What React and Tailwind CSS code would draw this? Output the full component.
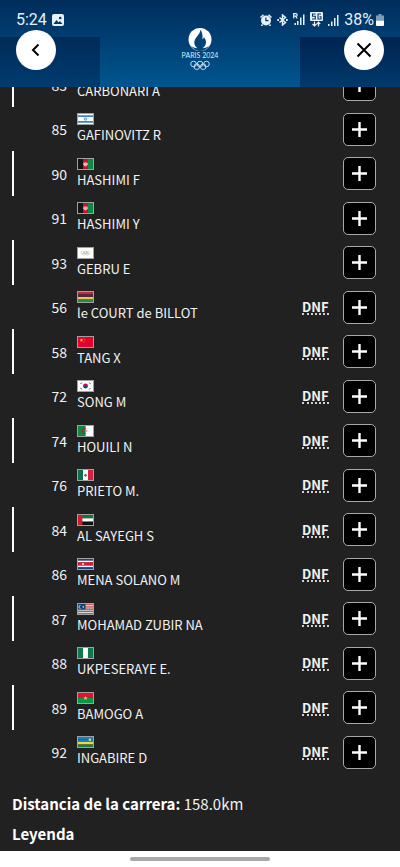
import React from 'react';

const riders = [
  { bib: 83, flag: 'arg', name: 'CARBONARI A' },
  { bib: 85, flag: 'isr', name: 'GAFINOVITZ R' },
  { bib: 90, flag: 'afg', name: 'HASHIMI F' },
  { bib: 91, flag: 'afg', name: 'HASHIMI Y' },
  { bib: 93, flag: 'eor', name: 'GEBRU E' },
  { bib: 56, flag: 'mri', name: 'le COURT de BILLOT', result: 'DNF' },
  { bib: 58, flag: 'chn', name: 'TANG X', result: 'DNF' },
  { bib: 72, flag: 'kor', name: 'SONG M', result: 'DNF' },
  { bib: 74, flag: 'alg', name: 'HOUILI N', result: 'DNF' },
  { bib: 76, flag: 'mex', name: 'PRIETO M.', result: 'DNF' },
  { bib: 84, flag: 'uae', name: 'AL SAYEGH S', result: 'DNF' },
  { bib: 86, flag: 'crc', name: 'MENA SOLANO M', result: 'DNF' },
  { bib: 87, flag: 'mas', name: 'MOHAMAD ZUBIR NA', result: 'DNF' },
  { bib: 88, flag: 'ngr', name: 'UKPESERAYE E.', result: 'DNF' },
  { bib: 89, flag: 'bur', name: 'BAMOGO A', result: 'DNF' },
  { bib: 92, flag: 'rwa', name: 'INGABIRE D', result: 'DNF' },
];

// stripes run top to bottom (h) or left to right (v), on a 48x33 field
const flags = {
  arg: { h: ['#74acdf', '#fff', '#74acdf'] },
  isr: {
    h: ['#fff'],
    art: (
      <>
        <path d="M0 4h48v6H0zM0 23h48v6H0z" fill="#3b87c4" />
        <path d="M24 11l5 8H19zM24 22l-5-8h10z" fill="none" stroke="#3b87c4" strokeWidth="1.5" />
      </>
    ),
  },
  afg: {
    v: ['#151515', '#c8102e', '#0b8a43'],
    art: (
      <>
        <circle cx="24" cy="17" r="6" fill="#f0a9a9" />
        <path d="M18 12q-2 10 6 12q8-2 6-12" fill="none" stroke="#f5c9c9" strokeWidth="2" />
      </>
    ),
  },
  eor: {
    h: ['#fff'],
    art: (
      <g fill="none" strokeWidth="1.4">
        <circle cx="14" cy="15" r="4.5" stroke="#8fa9b5" />
        <circle cx="24" cy="15" r="4.5" stroke="#777" />
        <circle cx="34" cy="15" r="4.5" stroke="#c99" />
        <circle cx="19" cy="19" r="4.5" stroke="#cbb67a" />
        <circle cx="29" cy="19" r="4.5" stroke="#8fb39a" />
      </g>
    ),
  },
  mri: { h: ['#c8283c', '#4a2a4c', '#f0c63c', '#1f8a4c'] },
  chn: {
    h: ['#e4002b'],
    art: (
      <g fill="#ffc72c">
        <path d="M11 4l1.600 4.400 4.600.2-3.600 2.900 1.300 4.500L11 13.400 7.100 16l1.300-4.500-3.600-2.900 4.600-.2z" />
        <circle cx="19" cy="4" r="1.200" />
        <circle cx="22" cy="8" r="1.200" />
        <circle cx="22" cy="13" r="1.200" />
        <circle cx="19" cy="17" r="1.200" />
      </g>
    ),
  },
  kor: {
    h: ['#fff'],
    art: (
      <>
        <path d="M16 16.500a8 8 0 0116 0z" fill="#d0103a" />
        <path d="M32 16.500a8 8 0 01-16 0z" fill="#173f8a" />
        <g stroke="#444" strokeWidth="3">
          <path d="M8 10l4-5M36 5l4 5M8 23l4 5M36 28l4-5" />
        </g>
      </>
    ),
  },
  alg: {
    v: ['#0b8a43', '#fff'],
    art: (
      <>
        <path d="M28 10a7.500 7.500 0 100 13a9 9 0 110-13z" fill="#d21034" />
        <path d="M23 16.500l7-3-3 3 3 3z" fill="#d21034" />
      </>
    ),
  },
  mex: {
    v: ['#0b6e4f', '#fff', '#d4213d'],
    art: <path d="M20 17q0-5 4-5t4 5q-1 5-4 5t-4-5z" fill="#7d6045" />,
  },
  uae: { h: ['#0b7a3b', '#fff', '#111'], art: <path d="M0 0h14v33H0z" fill="#c8202f" /> },
  crc: {
    h: ['#1c3f94', '#fff', '#da1a35', '#da1a35', '#fff', '#1c3f94'],
    art: <ellipse cx="16" cy="16.500" rx="4" ry="3" fill="#f2c9b8" />,
  },
  mas: {
    h: ['#e2555f', '#fff', '#e2555f', '#fff', '#e2555f', '#fff', '#e2555f', '#fff', '#e2555f', '#fff', '#e2555f'],
    art: (
      <>
        <path d="M0 0h24v18H0z" fill="#10457a" />
        <path d="M12 5a5 5 0 100 9a6 6 0 110-9z" fill="#e8dca0" />
        <circle cx="17" cy="9.500" r="2.500" fill="#e8dca0" />
      </>
    ),
  },
  ngr: { v: ['#0b7a48', '#fff', '#0b7a48'] },
  bur: {
    h: ['#e4102d', '#0a9648'],
    art: <path d="M24 10l1.800 4.600 4.900.3-3.800 3.100 1.300 4.800-4.200-2.700-4.200 2.700 1.300-4.800-3.800-3.100 4.900-.3z" fill="#fcd116" />,
  },
  rwa: {
    h: ['#1683c4', '#1683c4', '#f0d83c', '#1f7a45'],
    art: <circle cx="38" cy="9" r="4" fill="#f0d83c" />,
  },
};

function Flag({ code }) {
  const { h, v, art } = flags[code];
  const stripes = h || v;
  return (
    <svg viewBox="0 0 48 33" preserveAspectRatio="none" className="block w-[17px] h-3 border border-[#a0a0a0]">
      {stripes.map((fill, i) =>
        h ? (
          <rect key={i} y={(33 / stripes.length) * i} width="48" height={33 / stripes.length} fill={fill} />
        ) : (
          <rect key={i} x={(48 / stripes.length) * i} width={48 / stripes.length} height="33" fill={fill} />
        )
      )}
      {art}
    </svg>
  );
}

function SignalBars() {
  return (
    <svg viewBox="0 0 11 12" className="w-[11px] h-3" fill="currentColor">
      <path d="M0 10h1.500v2H0zM3 7.500h1.500V12H3zM6 4h1.500v8H6zM9 1h1.500v11H9z" />
    </svg>
  );
}

function StatusBar() {
  return (
    <div className="h-7 pt-[11px] px-4 flex justify-between text-[#e6f1fa] font-[Roboto,sans-serif] text-[16px] leading-[17px]">
      <div className="flex items-center gap-[5px]">
        <span>5:24</span>
        <svg viewBox="0 0 12 12" className="size-3">
          <rect width="12" height="12" rx="2" fill="currentColor" />
          <path d="M1.500 10l3-4 2 2.500L8 7l2.500 3z" fill="#003766" />
          <circle cx="8.200" cy="4" r="1.300" fill="#003766" />
        </svg>
      </div>
      <div className="flex items-center gap-[5px]">
        <svg viewBox="0 0 12 12" className="size-3" fill="currentColor">
          <path
            fillRule="evenodd"
            d="M6 1.500a5 5 0 110 10a5 5 0 010-10zM5.300 3.500v3.700h3.200V6H6.500V3.500z"
          />
          <path d="M.5 3.500L3.500.8M11.500 3.500L8.500.8M2.500 10.500L1.500 12M9.500 10.500l1 1.500" stroke="currentColor" strokeWidth="1.500" />
        </svg>
        <svg viewBox="0 0 11 12" className="w-[11px] h-3" fill="none" stroke="currentColor" strokeWidth="1.500">
          <path d="M2.500 3.500l6 5L5.500 11V1l3 2.500-6 5" />
          <path d="M.3 6h1.700M9 6h1.700" strokeWidth="1.800" />
        </svg>
        <svg viewBox="0 0 12 13" className="w-3 h-[13px]" fill="currentColor">
          <path d="M.7 5.500V.7h2.200a1.200 1.200 0 010 2.500H.7M2.600 3.200l1.500 2.300" fill="none" stroke="currentColor" strokeWidth="1.200" />
          <path d="M1.500 10H3v2H1.500zM4 8h1.500v4H4zM7 4.500h1.500V12H7zM10 1.500h1.500V12H10z" />
        </svg>
        <svg viewBox="0 0 13 15" className="w-[13px] h-[15px]">
          <rect width="13" height="9" rx="1" fill="currentColor" />
          <path d="M5.500 2H2.500v2.300h2.800V7H2M11 2H8v5h3V4.700H9.500" fill="none" stroke="#003766" strokeWidth="1.100" />
          <path d="M4.500 9.500v4M2.500 12l2 2 2-2M8.500 14.500v-4M6.800 12l1.700-1.800 1.700 1.800" fill="none" stroke="currentColor" strokeWidth="1.200" />
        </svg>
        <SignalBars />
        <span className="flex items-center gap-[2px]">
          38%
          <svg viewBox="0 0 8 12" className="w-2 h-3">
            <path d="M2.500 0h3v1.500H8v5H0v-5h2.500z" fill="#7f9bb5" />
            <path d="M0 6.500h8V11a1 1 0 01-1 1H1a1 1 0 01-1-1z" fill="#fff" />
          </svg>
        </span>
      </div>
    </div>
  );
}

function GamesLogo() {
  return (
    <svg viewBox="0 0 40 42" className="w-10 h-[42px]" role="img" aria-label="Paris 2024">
      <circle cx="20" cy="11.500" r="11.500" fill="#fff" />
      <path
        d="M20.500 1.500c-.3 3-1.500 4.500-3.500 7c-1.600 2-2.700 3.900-2.700 6c0 2.400 1.200 4.300 3.100 5.700c-2.600-.2-4.700-1-6.400-2.500c1.800 3 5 5.300 9 5.300s7.200-2.200 9-5.300c-1.700 1.500-3.800 2.300-6.400 2.500c2-1.400 3.400-3.300 3.400-5.900c0-2.300-.9-3.600-2.100-5.100c-.3 1-.8 1.600-1.500 2c.5-3.400-.2-7.100-1.900-9.700z"
        fill="#004479"
      />
      <text x="20" y="30" textAnchor="middle" fill="#dcebf5" fontSize="7" fontFamily="Lato, sans-serif" fontWeight="400">
        PARIS 2024
      </text>
      <g fill="none" stroke="#c4dbea" strokeWidth="1">
        <circle cx="13.500" cy="36" r="2.800" />
        <circle cx="20" cy="36" r="2.800" />
        <circle cx="26.500" cy="36" r="2.800" />
        <circle cx="16.800" cy="38.700" r="2.800" />
        <circle cx="23.200" cy="38.700" r="2.800" />
      </g>
    </svg>
  );
}

function Header() {
  return (
    <header className="sticky top-0 z-10 h-[87px] bg-linear-to-b from-[#002d5c] to-[#005690]">
      <div className="absolute inset-x-0 top-[37px] bottom-0 flex justify-between">
        <div className="w-1/4 bg-linear-to-b from-[#002a58] to-[#003c70]" />
        <div className="w-1/4 bg-linear-to-b from-[#002350] to-[#003a6c]" />
      </div>
      <div className="relative">
        <StatusBar />
        <div className="px-4 flex items-end justify-between">
          <button aria-label="Volver" className="size-10 rounded-full bg-white text-black grid place-items-center">
            <svg viewBox="0 0 14 14" className="size-[14px]" fill="none" stroke="currentColor" strokeWidth="2">
              <path d="M9.500 1.500L4 7l5.500 5.500" />
            </svg>
          </button>
          <GamesLogo />
          <button aria-label="Cerrar" className="size-10 rounded-full bg-white text-black grid place-items-center">
            <svg viewBox="0 0 16 16" className="size-4" fill="none" stroke="currentColor" strokeWidth="2">
              <path d="M1.500 1.500l13 13M14.500 1.500l-13 13" />
            </svg>
          </button>
        </div>
      </div>
    </header>
  );
}

function RiderRow({ rider, marked }) {
  return (
    <tr className={marked ? 'h-[45px]' : 'h-11'}>
      <td className="p-0">
        {marked && <div className="ml-3 w-[2px] h-[45px] bg-white" />}
      </td>
      <td className="p-0 text-right text-[14px]">{rider.bib}</td>
      <td className="p-0 pl-[10px]">
        <Flag code={rider.flag} />
        <div className="h-5 whitespace-nowrap">{rider.name}</div>
      </td>
      <td className="p-0 font-bold">
        {rider.result && (
          <abbr title="Did not finish" className="inline-block no-underline border-b-2 border-dotted border-[#d0d0d0] leading-3">
            {rider.result}
          </abbr>
        )}
      </td>
      <td className="p-0">
        <button
          aria-label={`Ver ${rider.name}`}
          className="size-[33px] rounded-[5px] border border-[#a8a8a8] bg-black text-white grid place-items-center"
        >
          <svg viewBox="0 0 15 15" className="size-[15px]" stroke="currentColor" strokeWidth="2.400">
            <path d="M7.500 0v15M0 7.500h15" />
          </svg>
        </button>
      </td>
    </tr>
  );
}

export default function App() {
  return (
    <div className="min-h-screen flex flex-col bg-[#212121] text-[#f2f2f2] font-['Noto_Sans_CJK_SC',sans-serif]">
      <Header />
      {/* list is scrolled partly under the header */}
      <main className="flex-1 -mt-[25px]">
        <table className="w-full table-fixed border-collapse text-[13px] leading-5">
          <colgroup>
            <col className="w-8" />
            <col className="w-[35px]" />
            <col />
            <col className="w-[41px]" />
            <col className="w-[57px]" />
          </colgroup>
          <tbody>
            {riders.map((rider, i) => (
              <RiderRow key={rider.bib} rider={rider} marked={i % 2 === 0} />
            ))}
          </tbody>
        </table>
        <div className="pt-[15px] pb-[2px] px-3 text-[15px] leading-[30px]">
          <p>
            <strong className="font-bold text-white">Distancia de la carrera:</strong> 158.0km
          </p>
          <h2 className="font-bold text-white">Leyenda</h2>
        </div>
      </main>
      <footer className="sticky bottom-0 h-4 bg-white flex justify-center items-center">
        <div className="w-[35%] h-1 rounded-full bg-[#a8a8a8]" />
      </footer>
    </div>
  );
}
